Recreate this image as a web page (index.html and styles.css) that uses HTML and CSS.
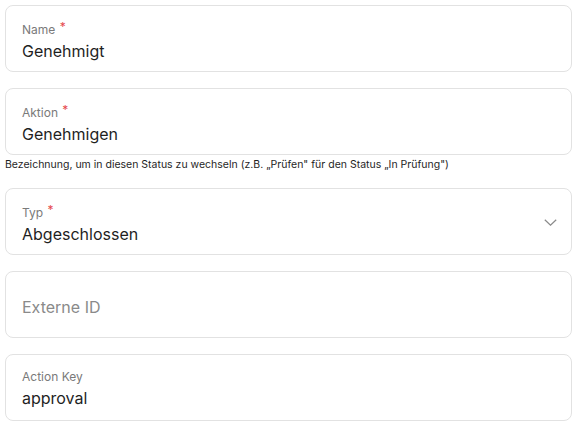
FILE: index.html
```html
<!DOCTYPE html>
<html lang="de">
<head>
<meta charset="utf-8">
<link rel="stylesheet" href="styles.css">
</head>
<body>
<form class="form">
  <div class="group">
    <div class="field">
      <span class="label">Name <span class="req">*</span></span>
      <span class="value">Genehmigt</span>
    </div>
  </div>
  <div class="group">
    <div class="field">
      <span class="label">Aktion <span class="req">*</span></span>
      <span class="value">Genehmigen</span>
    </div>
    <p class="helper">Bezeichnung, um in diesen Status zu wechseln (z.B. „Prüfen" für den Status „In Prüfung")</p>
  </div>
  <div class="group">
    <div class="field select">
      <span class="label">Typ <span class="req">*</span></span>
      <span class="value">Abgeschlossen</span>
      <svg class="chevron" width="13" height="7" viewBox="0 0 13 7"><path d="M0.8 0.8l5.7 5.4 5.7-5.4" fill="none" stroke="#8a8a8a" stroke-width="1.2"/></svg>
    </div>
  </div>
  <div class="group">
    <div class="field">
      <span class="placeholder">Externe ID</span>
    </div>
  </div>
  <div class="group">
    <div class="field">
      <span class="label">Action Key</span>
      <span class="value">approval</span>
    </div>
  </div>
</form>
</body>
</html>
```
FILE: styles.css
```css
* { box-sizing: border-box; }
body {
  margin: 5px;
  background: #fff;
  font-family: Inter, "Liberation Sans", sans-serif;
  color: #1f1f1f;
}
.form {
  display: flex;
  flex-direction: column;
  gap: 16px;
}
.field {
  position: relative;
  height: 67px;
  border: 1px solid #e2e2e2;
  border-radius: 8px;
  padding: 4px 16px 0;
  display: flex;
  flex-direction: column;
  justify-content: center;
}
.label {
  font-size: 12px;
  line-height: 16px;
  color: #7a7a7a;
}
.req {
  color: #e5484d;
  font-size: 12px;
  vertical-align: 3px;
  margin-left: 1px;
}
.value {
  margin-top: 1px;
  font-size: 16px;
  line-height: 24px;
  color: #1f1f1f;
}
.placeholder {
  font-size: 16px;
  line-height: 24px;
  color: #8a8a8a;
}
.chevron {
  position: absolute;
  right: 14px;
  top: 30px;
}
.helper {
  margin: 3px 0 0;
  font-size: 10.5px;
  line-height: 14px;
  color: #1f1f1f;
}
```
